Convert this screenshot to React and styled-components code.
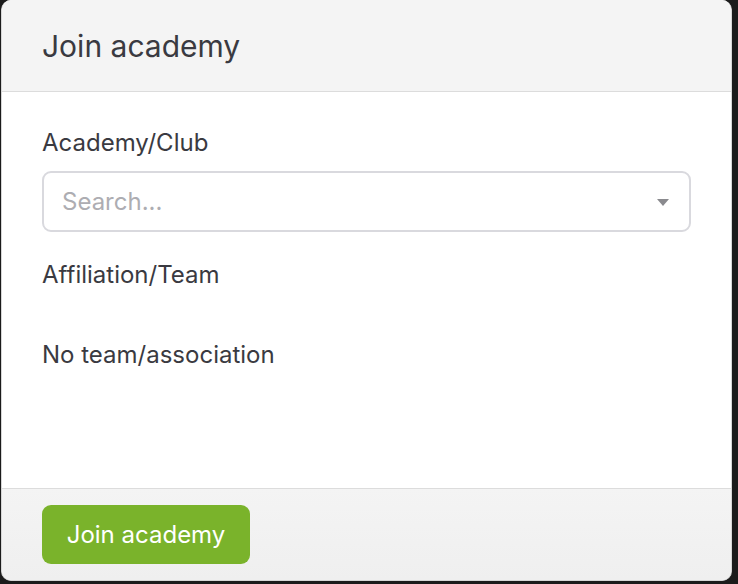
import React from "react";
import styled, { createGlobalStyle } from "styled-components";

const Global = createGlobalStyle`
  html, body { margin: 0; padding: 0; background: #1b1b1b; }
  body { font-family: Inter, "Noto Sans", sans-serif; }
  * { box-sizing: border-box; }
`;

const Page = styled.div`
  width: 738px;
  height: 584px;
  padding: 0 6px 3px 1px;
  background: #1b1b1b;
`;

const Modal = styled.div`
  height: 581px;
  display: flex;
  flex-direction: column;
  background: #fff;
  border-radius: 10px;
  overflow: hidden;
  border: 1px solid #d6d6d6;
  border-top: none;
`;

const Header = styled.div`
  height: 92px;
  flex: none;
  background: #f4f4f4;
  border-bottom: 1px solid #dcdcdc;
  padding: 28px 0 0 40px;
`;

const Title = styled.h2`
  margin: 0;
  font-weight: 400;
  font-size: 30px;
  line-height: 36px;
  color: #3a3a41;
`;

const Body = styled.div`
  flex: 1;
  padding: 37px 40px 0 40px;
  display: flex;
  flex-direction: column;
`;

const Label = styled.div`
  font-size: 24px;
  line-height: 28px;
  color: #3a3a41;
  margin-top: ${(p) => p.$mt || 0}px;
`;

const Select = styled.div`
  margin-top: 14px;
  height: 61px;
  border: 2px solid #d9d9de;
  border-radius: 9px;
  display: flex;
  align-items: center;
  padding: 0 20px 0 18px;
  justify-content: space-between;
`;

const Placeholder = styled.span`
  font-size: 24px;
  color: #adadb2;
`;

const Caret = styled.span`
  width: 0;
  height: 0;
  border-left: 6px solid transparent;
  border-right: 6px solid transparent;
  border-top: 7px solid #8a8a8e;
  margin-top: 2px;
`;

const Footer = styled.div`
  flex: none;
  height: 92px;
  background: linear-gradient(#f4f4f4, #efefef);
  border-top: 1px solid #dcdcdc;
  padding: 16px 0 0 40px;
`;

const Button = styled.button`
  width: 208px;
  height: 59px;
  border: none;
  border-radius: 9px;
  background: #7ab32b;
  color: #fff;
  font-family: Inter, "Noto Sans", sans-serif;
  font-size: 24px;
  padding: 0;
`;

export default function App() {
  return (
    <>
      <Global />
      <Page>
        <Modal>
          <Header>
            <Title>Join academy</Title>
          </Header>
          <Body>
            <Label>Academy/Club</Label>
            <Select>
              <Placeholder>Search...</Placeholder>
              <Caret />
            </Select>
            <Label $mt={29}>Affiliation/Team</Label>
            <Label $mt={52}>No team/association</Label>
          </Body>
          <Footer>
            <Button>Join academy</Button>
          </Footer>
        </Modal>
      </Page>
    </>
  );
}
